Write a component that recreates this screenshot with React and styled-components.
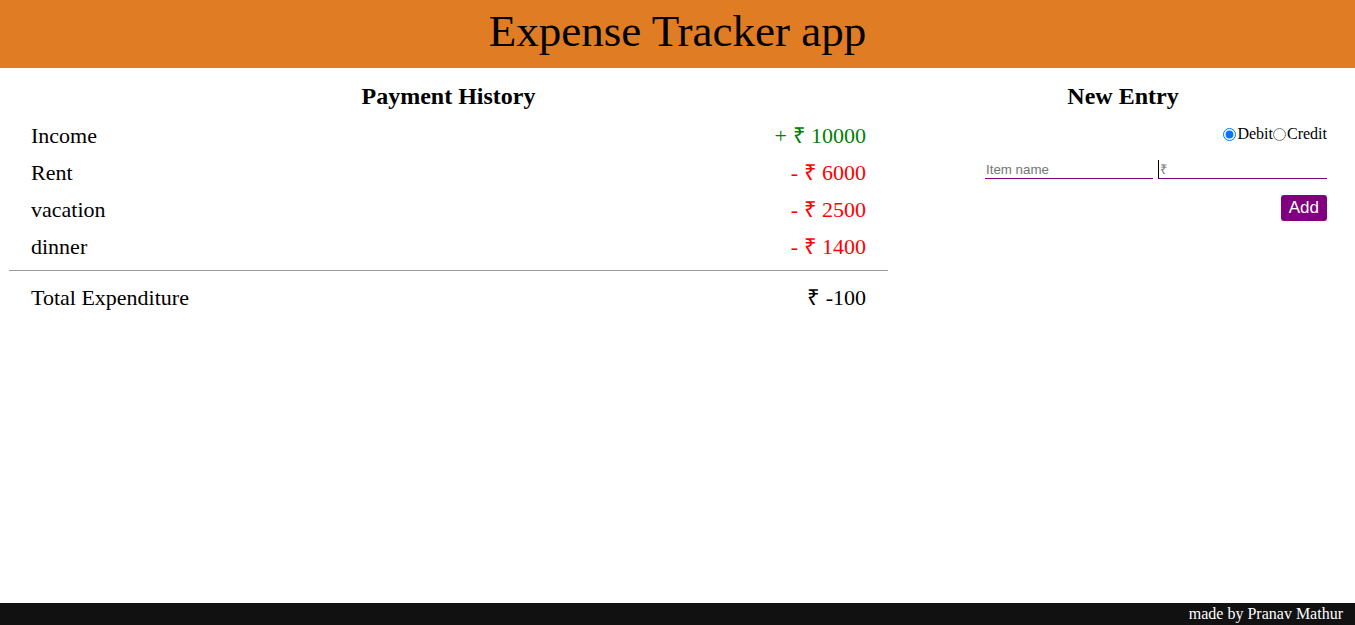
import React, { useState } from "react";
import styled, { createGlobalStyle } from "styled-components";

const GlobalStyle = createGlobalStyle`
  body {
    margin: 0;
    font-family: "Liberation Serif", "Times New Roman", serif;
  }
`;

const entries = [
  { name: "Income", amount: 10000, type: "credit" },
  { name: "Rent", amount: 6000, type: "debit" },
  { name: "vacation", amount: 2500, type: "debit" },
  { name: "dinner", amount: 1400, type: "debit" },
];

function App() {
  const [kind, setKind] = useState("debit");
  const total = entries.reduce(
    (sum, e) => (e.type === "credit" ? sum - e.amount : sum + e.amount),
    0
  );

  return (
    <Page>
      <GlobalStyle />
      <Header>Expense Tracker app</Header>
      <Main>
        <History>
          <Heading>Payment History</Heading>
          <List>
            {entries.map((e, idx) => (
              <Row key={idx}>
                <span>{e.name}</span>
                <Amount $credit={e.type === "credit"}>
                  {e.type === "credit" ? "+" : "-"} ₹ {e.amount}
                </Amount>
              </Row>
            ))}
          </List>
          <Divider />
          <Row>
            <span>Total Expenditure</span>
            <span>₹ {total}</span>
          </Row>
        </History>
        <EntryPanel>
          <Heading>New Entry</Heading>
          <Form>
            <RadioGroup>
              <RadioLabel>
                <input
                  type="radio"
                  name="kind"
                  checked={kind === "debit"}
                  onChange={() => setKind("debit")}
                />
                Debit
              </RadioLabel>
              <RadioLabel>
                <input
                  type="radio"
                  name="kind"
                  checked={kind === "credit"}
                  onChange={() => setKind("credit")}
                />
                Credit
              </RadioLabel>
            </RadioGroup>
            <Inputs>
              <TextInput type="text" placeholder="Item name" />
              <TextInput type="number" placeholder="₹" $divider />
            </Inputs>
            <ButtonRow>
              <AddButton>Add</AddButton>
            </ButtonRow>
          </Form>
        </EntryPanel>
      </Main>
      <Footer>made by Pranav Mathur</Footer>
    </Page>
  );
}

export default App;

const Page = styled.div`
  min-height: 100vh;
  display: flex;
  flex-direction: column;
`;

const Header = styled.header`
  background-color: #e07c24;
  height: 68px;
  box-sizing: border-box;
  display: flex;
  align-items: center;
  justify-content: center;
  padding-bottom: 6px;
  font-size: 45px;
`;

const Main = styled.main`
  flex: 1;
  display: grid;
  grid-template-columns: 897px minmax(0, 1fr);
  padding-right: 6px;
`;

const History = styled.section`
  padding: 0 9px;
`;

const Heading = styled.h2`
  margin: 15px 0 7px;
  font-size: 24px;
  text-align: center;
`;

const List = styled.div`
  display: flex;
  flex-direction: column;
`;

const Row = styled.div`
  display: flex;
  justify-content: space-between;
  align-items: baseline;
  padding: 0 22px;
  line-height: 37px;
  font-size: 22px;
`;

const Amount = styled.span`
  color: ${(props) => (props.$credit ? "green" : "red")};
`;

const Divider = styled.hr`
  margin: 5px 0 8px;
  border: none;
  border-top: 1px solid #999;
`;

const EntryPanel = styled.section`
  display: flex;
  flex-direction: column;
`;

const Form = styled.div`
  display: flex;
  flex-direction: column;
  padding: 0 22px 0 88px;
`;

const RadioGroup = styled.div`
  display: flex;
  justify-content: flex-end;
  margin-top: 8px;
  font-size: 16px;
`;

const RadioLabel = styled.label`
  display: flex;
  align-items: center;
  input {
    margin: 0 1px 0 0;
    width: 13px;
    height: 13px;
  }
`;

const Inputs = styled.div`
  display: flex;
  gap: 5px;
  margin-top: 17px;
`;

const TextInput = styled.input`
  flex: 1;
  min-width: 0;
  width: 100%;
  border: none;
  border-bottom: 1px solid purple;
  border-left: ${(props) => (props.$divider ? "1px solid #000" : "none")};
  padding: 1px 0 0 1px;
  height: 17px;
  font-family: "Liberation Sans", Arial, sans-serif;
  font-size: 13.33px;
  outline: none;
  &::placeholder {
    color: #757575;
  }
`;

const ButtonRow = styled.div`
  display: flex;
  justify-content: flex-end;
  margin-top: 16px;
`;

const AddButton = styled.button`
  background-color: purple;
  color: white;
  border: none;
  border-radius: 3px;
  padding: 2px 8px;
  height: 26px;
  font-family: "Liberation Sans", Arial, sans-serif;
  font-size: 17px;
`;

const Footer = styled.footer`
  background-color: #111;
  color: white;
  height: 22px;
  display: flex;
  align-items: center;
  justify-content: flex-end;
  padding-right: 12px;
  font-size: 16px;
`;
